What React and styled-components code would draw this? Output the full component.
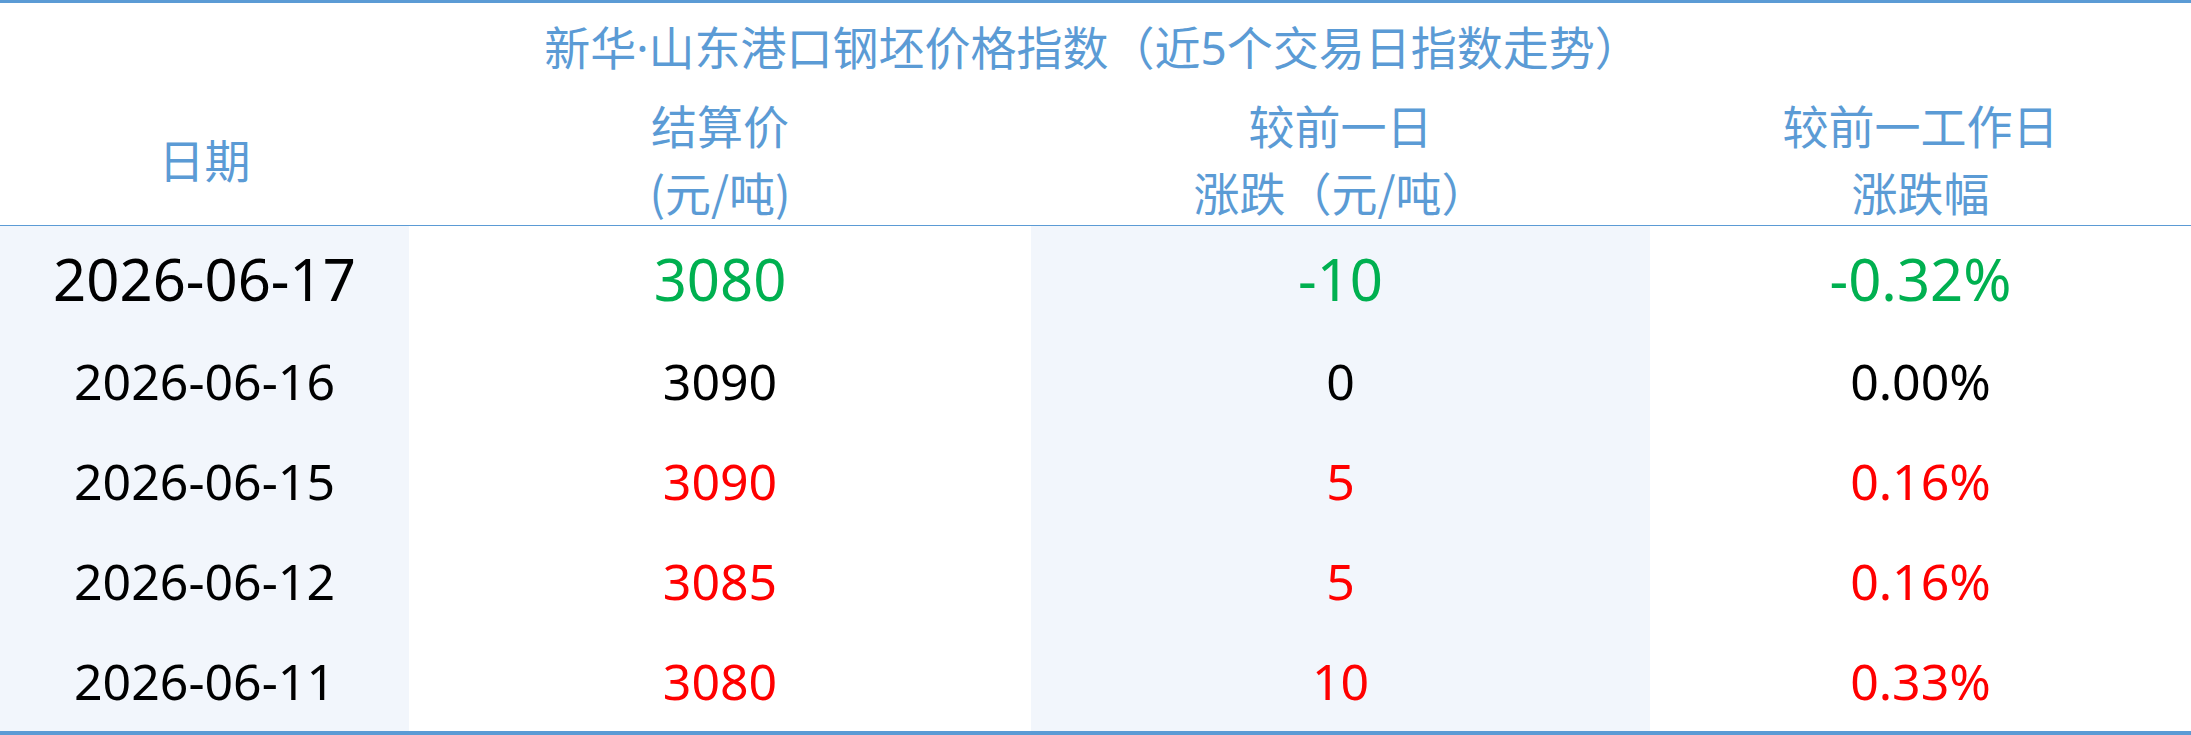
import React from "react";
import styled, { createGlobalStyle } from "styled-components";

const Global = createGlobalStyle`
  html, body { margin: 0; padding: 0; background: #ffffff; }
  body { font-family: "Noto Sans", "Noto Sans CJK SC", sans-serif; }
`;

const BLUE = "#5b9bd5";
const SHADE = "#f2f6fc";
const COLS = "409px 622px 619px 1fr";

const Table = styled.section`
  width: 2191px;
  border-top: 3px solid ${BLUE};
  border-bottom: 4px solid ${BLUE};
  box-sizing: border-box;
  background: #fff;
`;

const Title = styled.h1`
  margin: 0;
  height: 88px;
  line-height: 88px;
  text-align: center;
  font-size: 46px;
  font-weight: 400;
  color: ${BLUE};
  font-family: "Noto Sans", "Noto Sans CJK SC", sans-serif;
  padding-right: 6px;
`;

const HeadRow = styled.div`
  display: grid;
  grid-template-columns: ${COLS};
  border-bottom: 1px solid ${BLUE};
`;

const HeadCell = styled.div`
  display: flex;
  flex-direction: column;
  align-items: center;
  justify-content: center;
  height: 134px;
  font-family: "Noto Sans CJK SC", sans-serif;
  font-size: 46px;
  line-height: 67px;
  color: ${BLUE};
  white-space: nowrap;
`;

const BodyRow = styled.div`
  display: grid;
  grid-template-columns: ${COLS};
  height: ${(p) => (p.$first ? 105 : 100)}px;
`;

const toneColor = { up: "#ff0000", down: "#00b050", flat: "#000000" };

const Cell = styled.div`
  display: flex;
  align-items: center;
  justify-content: center;
  background: ${(p) => (p.$shade ? SHADE : "#ffffff")};
  color: ${(p) => toneColor[p.$tone] || "#000000"};
  font-family: "Noto Sans", "Noto Sans CJK SC", sans-serif;
  font-size: ${(p) => (p.$big ? 58 : 50)}px;
  font-weight: 400;
  white-space: nowrap;
`;

const rows = [
  { date: "2026-06-17", price: "3080", diff: "-10", pct: "-0.32%", tone: "down" },
  { date: "2026-06-16", price: "3090", diff: "0", pct: "0.00%", tone: "flat" },
  { date: "2026-06-15", price: "3090", diff: "5", pct: "0.16%", tone: "up" },
  { date: "2026-06-12", price: "3085", diff: "5", pct: "0.16%", tone: "up" },
  { date: "2026-06-11", price: "3080", diff: "10", pct: "0.33%", tone: "up" },
];

export default function App() {
  return (
    <>
      <Global />
      <Table>
        <Title>新华·山东港口钢坯价格指数（近5个交易日指数走势）</Title>
        <HeadRow>
          <HeadCell>日期</HeadCell>
          <HeadCell>
            <span>结算价</span>
            <span>(元/吨)</span>
          </HeadCell>
          <HeadCell>
            <span>较前一日</span>
            <span>涨跌（元/吨）</span>
          </HeadCell>
          <HeadCell>
            <span>较前一工作日</span>
            <span>涨跌幅</span>
          </HeadCell>
        </HeadRow>
        {rows.map((r, i) => (
          <BodyRow key={r.date} $first={i === 0}>
            <Cell $shade $big={i === 0} $tone="flat">{r.date}</Cell>
            <Cell $big={i === 0} $tone={r.tone}>{r.price}</Cell>
            <Cell $shade $big={i === 0} $tone={r.tone}>{r.diff}</Cell>
            <Cell $big={i === 0} $tone={r.tone}>{r.pct}</Cell>
          </BodyRow>
        ))}
      </Table>
    </>
  );
}
